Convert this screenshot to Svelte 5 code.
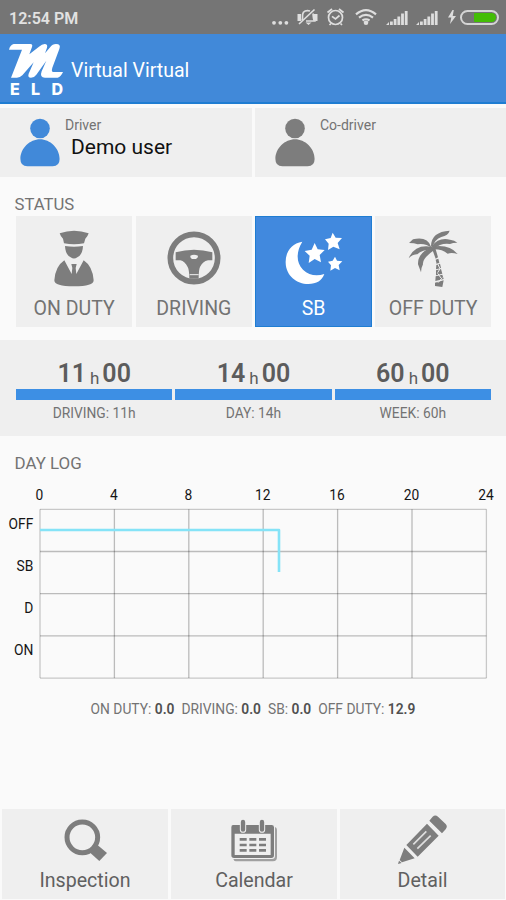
<script lang="ts">
  type Status = { id: string; label: string };

  const statuses: Status[] = [
    { id: 'on', label: 'ON DUTY' },
    { id: 'driving', label: 'DRIVING' },
    { id: 'sb', label: 'SB' },
    { id: 'off', label: 'OFF DUTY' }
  ];

  const timers = [
    { hours: '11', minutes: '00', label: 'DRIVING: 11h' },
    { hours: '14', minutes: '00', label: 'DAY: 14h' },
    { hours: '60', minutes: '00', label: 'WEEK: 60h' }
  ];

  const totals = [
    { label: 'ON DUTY', value: '0.0' },
    { label: 'DRIVING', value: '0.0' },
    { label: 'SB', value: '0.0' },
    { label: 'OFF DUTY', value: '12.9' }
  ];

  const hours = [0, 4, 8, 12, 16, 20, 24];
  const rows = ['OFF', 'SB', 'D', 'ON'];

  // chart geometry
  const left = 40;
  const top = 29.3;
  const width = 446.4;
  const rowHeight = 42.2;
  const hourX = (h: number) => left + (h / 24) * width;
  const rowY = (i: number) => top + i * rowHeight;

  let current = $state('sb');
</script>

{#snippet person()}
  <svg class="person" viewBox="0 0 40 49">
    <circle cx="20" cy="10.5" r="9.8" />
    <path d="M20 21.2C30 21.2 39.6 30 39.6 41q0 7.3-7 7.3H7.4q-7 0-7-7.3C.4 30 10 21.2 20 21.2z" />
  </svg>
{/snippet}

{#snippet signal()}
  <svg class="signal" width="22" height="16" viewBox="0 0 22 16">
    <path d="M0 15l3-3v3zM4 11.5h2.8V15H4zM7.7 9h2.8v6H7.7zM11.4 6.5h2.8V15h-2.8zM15.1 3.5h2.8V15h-2.8zM18.8 1h2.8v14h-2.8z" />
  </svg>
{/snippet}

<div class="screen">
  <div class="statusbar">
    <span class="time">12:54 PM</span>
    <svg class="system" width="115" height="34" viewBox="0 0 115 34">
      <g class="fill">
        <circle cx="3" cy="22.8" r="1.9" />
        <circle cx="9.3" cy="22.8" r="1.9" />
        <circle cx="15.4" cy="22.8" r="1.9" />
        <path d="M26.5 14H30v7h-3.5zM43 14h3.5v7H43zM34.5 22.5h6l-3 2.5z" />
        <circle cx="95" cy="22.8" r="2.3" />
      </g>
      <g class="line">
        <path d="M31 20.5c1-2 .3-4 .6-6 .5-3.5 4-4.5 7.4-3.5M42 13.5c.5 2.8-.2 4.500 1.500 7.500H35" />
        <path d="M28 24L43.5 9.5" />
        <circle cx="64.5" cy="17.5" r="7" />
        <path d="M56.5 12.5L61 9M72.5 12.5L68 9M61 16.3l3.5 2.700 4-3.500M60 23.500L58.500 25M69.500 23.500L71 25" />
        <path class="wave" d="M85 14.3q10-8.500 20 0M88 17.600q7-5.500 14 0M91.500 20.500q3.500-2.500 7 0" />
      </g>
    </svg>
    {@render signal()}
    {@render signal()}
    <svg class="bolt" width="8" height="14" viewBox="0 0 8 14">
      <path d="M4.5 0L0 7.500h3.300L2 14l6-8H4.700L5.800 0z" />
    </svg>
    <div class="battery"><div class="charge"></div></div>
  </div>

  <header>
    <div class="logo">
      <svg width="55" height="36" viewBox="27 129 165 108">
        <path d="M41 132H91Q99 132 96 141L88 163L117 140Q126 132 134 132Q144 132 141 143L135 160L151 141Q157 132 168 132Q184 132 178 147L157 203Q153 216 160 216H189Q183 230 173 233H135Q118 233 125 214L139 182L109 224Q103 233 93 233Q82 233 86 221L101 187L67 226Q60 233 51 233H33L66 149H27Q30 135 41 132z" />
      </svg>
      <div class="eld"><span>E</span><span>L</span><span>D</span></div>
    </div>
    <h1>Virtual Virtual</h1>
  </header>

  <section class="drivers">
    <div class="driver active">
      {@render person()}
      <div>
        <small>Driver</small>
        <strong>Demo user</strong>
      </div>
    </div>
    <div class="driver">
      {@render person()}
      <div><small>Co-driver</small></div>
    </div>
  </section>

  <h2 class="status-title">STATUS</h2>
  <section class="statuses">
    {#each statuses as status (status.id)}
      <button class="status" class:selected={current === status.id} onclick={() => (current = status.id)}>
        {#if status.id === 'on'}
          <svg viewBox="133 54 180 180">
            <path d="M180 70Q223 54 267 70Q264 80 257 86L253 100Q223 106 193 100L190 86Q183 80 180 70z" />
            <path d="M196 108Q223 113 250 108Q249 134 233 142Q223 149 213 142Q197 134 196 108z" />
            <path d="M194 151L216 192L218 174L215 162H231L228 174L230 192L252 151Q279 169 282 211Q282 229 223 229Q164 229 164 211Q167 169 194 151z" />
          </svg>
        {:else if status.id === 'driving'}
          <svg viewBox="492 54 180 180">
            <circle class="wheel" cx="582" cy="144" r="71" />
            <path fill-rule="evenodd" d="M527 127Q582 112 637 127V151H624Q608 154 600 171Q596 180 596 206H568Q568 180 563 171Q555 154 541 151H527zM571 137Q570 147 582 147Q594 147 594 137Q582 132 571 137z" />
            <path class="gap" d="M569 194H596" />
          </svg>
        {:else if status.id === 'sb'}
          <svg viewBox="92 54 180 180">
            <path d="M147 95C113 100 96 127 97 158C98 197 130 222 165 222C190 222 206 212 213 192C191 199 167 197 149 179C127 158 129 123 147 95z" />
            <path d="M184 99l9 19 21 2-15 15 4 22-19-10-18 12 3-22-15-14 21-4z" />
            <path d="M238 68l9 15 19 1-13 15 6 19-19-8-16 10 2-19-11-13 17-4z" />
            <path d="M245 140l6 12 16 2-11 11 3 16-14-7-14 8 2-16-9-11 14-3z" />
          </svg>
        {:else}
          <svg viewBox="450 54 180 180">
            <path d="M534 108Q535 65 590 62Q586 76 565 81Q545 88 538 113z" />
            <path d="M534 110Q523 78 480 88L468 99Q484 99 494 103Q517 99 538 115z" />
            <path d="M536 109Q557 81 591 89Q605 91 613 98Q599 98 591 102Q563 98 543 117z" />
            <path d="M536 110Q485 101 467 145Q480 132 493 133Q506 119 540 118z" />
            <path d="M538 110Q589 102 614 132Q596 127 584 131Q567 117 540 118z" />
            <path d="M538 111Q494 127 495 163L504 187Q504 174 510 163Q507 146 543 121z" />
            <path d="M536 113l10-2 9 31-7 4zM548 149l8-3 3 12-8 4zM550 165l11-4 3 13-15 4zM549 181l15-4 4 14-19 5zM548 199l20-5 4 13-25 6zM546 218l26-7-4 20-22-3z" />
            <path class="notch" d="M554 161l6 13M562 175l-8 13M554 190l10 14M568 203l-13 15" />
          </svg>
        {/if}
        <span>{status.label}</span>
      </button>
    {/each}
  </section>

  <section class="timers">
    {#each timers as timer (timer.label)}
      <div class="timer">
        <div class="clock"><b>{timer.hours}</b><i>h</i><b>{timer.minutes}</b></div>
        <div class="bar"></div>
        <span>{timer.label}</span>
      </div>
    {/each}
  </section>

  <h2 class="log-title">DAY LOG</h2>
  <svg class="chart" width="506" height="210" viewBox="0 0 506 210">
    {#each hours as h (h)}
      <text class="hour" x={hourX(h) - 0.5} y="20">{h}</text>
      <line class:edge={h % 24 === 0} x1={hourX(h)} x2={hourX(h)} y1={top} y2={rowY(4)} />
    {/each}
    {#each rows as row, i (row)}
      <text class="row" x="33.3" y={rowY(i) + 19.5}>{row}</text>
      <line class:edge={i === 0} x1={left} x2={left + width} y1={rowY(i)} y2={rowY(i)} />
    {/each}
    <line class="edge" x1={left} x2={left + width} y1={rowY(4)} y2={rowY(4)} />
    <polyline points="40,50 279,50 279,92" />
  </svg>

  <p class="totals">
    {#each totals as total (total.label)}
      <span>{total.label}: <b>{total.value}</b></span>
    {/each}
  </p>

  <nav>
    <button>
      <svg viewBox="180 40 144 154">
        <circle class="lens" cx="244" cy="113" r="46" />
        <path d="M285 132L318 160L295 184L264 156z" />
      </svg>
      <span>Inspection</span>
    </button>
    <button>
      <svg viewBox="689 40 144 154">
        <path class="pages" d="M824 82q6 2 6 8v82q0 13-12 13H706q-5 0-7-7h116q9 0 9-9z" />
        <path fill-rule="evenodd" d="M698 76H814Q821 76 821 83V167Q821 175 813 175H701Q693 175 693 167V83Q693 76 698 76zM703 102V166H811V102z" />
        <path class="cells" d="M718 119h21M747 119h21M776 119h21M718 136h21M747 136h21M776 136h21M718 152h21M747 152h21M776 152h21" />
        <path class="ring-gap" d="M728 67v23M785 67v23" />
        <path class="ring" d="M728 67v23M785 67v23" />
      </svg>
      <span>Calendar</span>
    </button>
    <button>
      <svg viewBox="434 40 150 154">
        <path d="M528 63L538 51Q546 44 554 51L577 73Q584 80 577 89L566 101zM521 72L556 108L493 171L459 136zM453 144L484 176L446 188L439 181z" />
        <path d="M437 183l8 7-11 3z" />
        <path class="stripe" d="M480 134L519 95M492 147L532 108" />
      </svg>
      <span>Detail</span>
    </button>
  </nav>
</div>

<style>
  :global(body) {
    margin: 0;
    background: #fafafa;
  }

  .screen {
    width: 506px;
    height: 900px;
    display: flex;
    flex-direction: column;
    overflow: hidden;
    background: #fafafa;
    font-family: Roboto, sans-serif;
    color: #737373;
  }

  svg {
    display: block;
    flex: none;
    fill: #7d7d7d;
  }

  button {
    border: 0;
    padding: 0;
    font: inherit;
    color: inherit;
    background: #efefef;
    display: flex;
    flex-direction: column;
    align-items: center;
  }

  h1,
  h2 {
    margin: 0;
    font-weight: 400;
  }

  .statusbar {
    flex: none;
    height: 34px;
    display: flex;
    align-items: center;
    background: #757575;
    color: #e2e2e2;
  }

  .time {
    width: 262px;
    padding-left: 9px;
    padding-top: 2px;
    font-size: 16px;
    font-weight: 600;
  }

  .system .fill,
  .signal,
  .bolt {
    fill: #dedede;
  }

  .system .line {
    fill: none;
    stroke: #dedede;
    stroke-width: 1.7;
  }

  .system .wave {
    stroke-width: 2.2;
  }

  .signal {
    margin: 2px 8px 0 0;
  }

  .bolt {
    margin: 0 4px 0 2px;
  }

  .battery {
    box-sizing: border-box;
    width: 39px;
    height: 15px;
    border: 2px solid #d5d5d5;
    border-radius: 8px;
    padding: 1px;
    display: flex;
    justify-content: flex-end;
  }

  .charge {
    width: 22px;
    border-radius: 1px 5px 5px 1px;
    background: #43bd05;
  }

  header {
    flex: none;
    box-sizing: border-box;
    height: 70px;
    border-bottom: 2px solid #1f7dd2;
    background: #4189d9;
    color: #fff;
    display: flex;
    padding: 9px 0 0 9px;
  }

  .logo svg {
    fill: #fff;
  }

  .eld {
    width: 53px;
    margin: 2px 0 0 1px;
    display: flex;
    justify-content: space-between;
    font-family: Inter, sans-serif;
    font-size: 16px;
    line-height: 16px;
    font-weight: 800;
  }

  h1 {
    margin: 16px 0 0 7px;
    font-size: 19.5px;
    line-height: 24px;
  }

  .drivers {
    flex: none;
    display: grid;
    grid-template-columns: 252px 251px;
    gap: 3px;
    padding-top: 4px;
    height: 69px;
  }

  .driver {
    display: flex;
    background: #efefef;
    padding: 10px 0 0 20px;
  }

  .person {
    width: 40px;
    height: 49px;
    fill: #7d7d7d;
  }

  .active .person {
    fill: #4189d9;
  }

  .driver small {
    display: block;
    margin-left: 5px;
    font-size: 14px;
    line-height: 14px;
  }

  .driver strong {
    display: block;
    margin: 3px 0 0 11px;
    font-size: 21px;
    line-height: 24px;
    font-weight: 400;
    color: #111;
  }

  .status-title {
    padding: 18px 0 0 14.5px;
    height: 21px;
    font-size: 16.7px;
    line-height: 20px;
  }

  .statuses {
    display: grid;
    grid-template-columns: repeat(4, 116.3px);
    gap: 3.4px;
    padding-left: 16px;
  }

  .status {
    box-sizing: border-box;
    height: 111px;
    padding-top: 12px;
  }

  .status svg {
    width: 60px;
    height: 60px;
  }

  .status span {
    margin-top: 9px;
    font-size: 19.5px;
    line-height: 24px;
  }

  .selected {
    background: #4189de;
    outline: 1px solid #1f7dd2;
    outline-offset: -1px;
    color: #fff;
  }

  .selected svg {
    fill: #fff;
  }

  .wheel {
    fill: none;
    stroke: #7d7d7d;
    stroke-width: 17;
  }

  .gap,
  .notch {
    stroke: #efefef;
    stroke-width: 3;
    fill: none;
  }

  .timers {
    box-sizing: border-box;
    flex: none;
    height: 96px;
    margin-top: 13px;
    padding: 18px 15px 0 16px;
    display: grid;
    grid-template-columns: repeat(3, 1fr);
    gap: 3px;
    background: #efefef;
  }

  .timer {
    display: flex;
    flex-direction: column;
    align-items: center;
  }

  .clock {
    height: 31px;
    display: flex;
    line-height: 31px;
    color: #5c5c5c;
  }

  .clock b {
    font-size: 25px;
    font-weight: 600;
  }

  .clock i {
    margin: 5px 3px 0 4px;
    font-size: 17px;
    font-style: normal;
  }

  .bar {
    width: 100%;
    height: 11px;
    background: #3d8fe4;
  }

  .timer span {
    margin-top: 4px;
    font-size: 13.8px;
    line-height: 18px;
  }

  .log-title {
    padding: 17px 0 0 14.5px;
    height: 27px;
    font-size: 16.9px;
    line-height: 20px;
  }

  .chart line {
    stroke: #000;
    stroke-opacity: 0.25;
    stroke-width: 1.3;
  }

  .chart .edge {
    stroke-opacity: 0.2;
  }

  .chart text {
    font-size: 13.8px;
    fill: #151515;
  }

  .hour {
    text-anchor: middle;
  }

  .row {
    text-anchor: end;
  }

  .chart polyline {
    fill: none;
    stroke: #85e3f7;
    stroke-width: 2.6;
    stroke-linejoin: round;
  }

  .totals {
    margin: 10px 0 0;
    display: flex;
    justify-content: center;
    gap: 7px;
    font-size: 13.8px;
    line-height: 18px;
  }

  .totals b {
    font-weight: 600;
    color: #505050;
  }

  nav {
    display: grid;
    grid-template-columns: 166px 166px 165px;
    gap: 3px;
    margin-top: auto;
    padding: 0 1px 1px 2px;
    height: 90px;
  }

  nav svg {
    height: 51.3px;
    width: 50px;
    margin-top: 4px;
  }

  nav span {
    margin-top: 5px;
    font-size: 19.6px;
    line-height: 24px;
    color: #606060;
  }

  .lens {
    fill: none;
    stroke: #7d7d7d;
    stroke-width: 15;
  }

  .pages {
    fill: #a0a0a0;
  }

  .cells {
    stroke: #7d7d7d;
    stroke-width: 8;
  }

  .ring-gap,
  .ring {
    fill: none;
    stroke: #efefef;
    stroke-width: 19;
    stroke-linecap: round;
  }

  .ring {
    stroke: #7d7d7d;
    stroke-width: 13;
  }

  .stripe {
    stroke: #dedede;
    stroke-width: 5;
  }
</style>
